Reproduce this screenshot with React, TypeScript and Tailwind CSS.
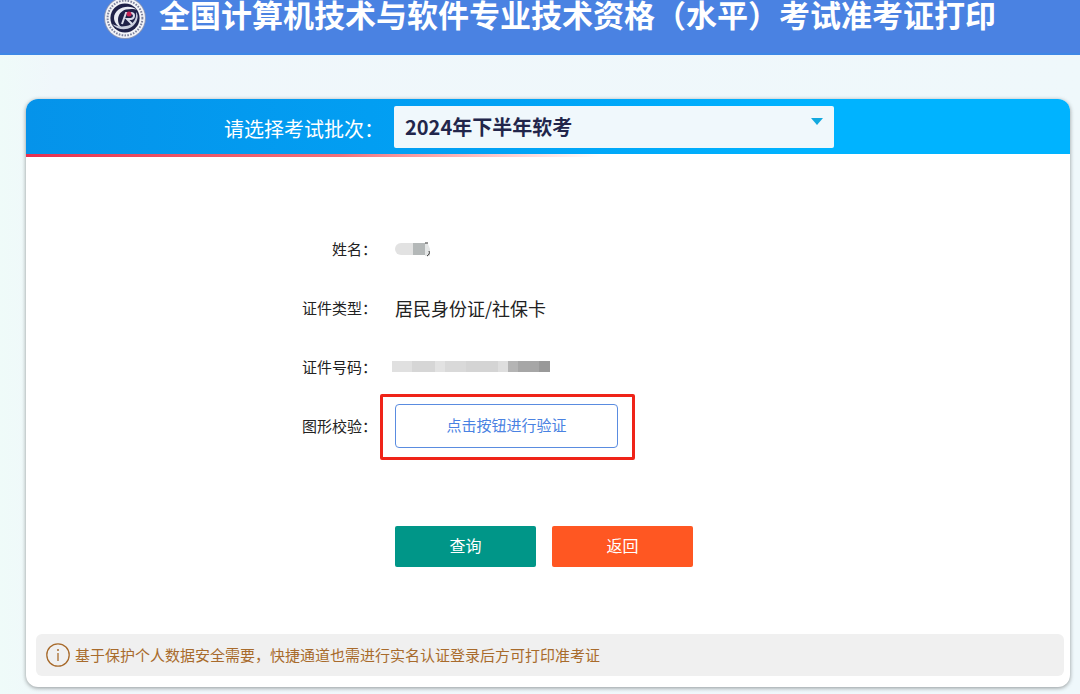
import { useState } from "react";
import type { ReactNode } from "react";

const idBlocks = [
  "w-[20px] bg-[#e0e0e0]",
  "w-[23px] bg-[#d6d6d6]",
  "w-[10px] bg-[#e2e2e2]",
  "w-[21px] bg-[#d9d9d9]",
  "w-[32px] bg-[#d4d4d4]",
  "w-[10px] bg-[#dedede]",
  "w-[10px] bg-[#b4b4b4]",
  "w-[21px] bg-[#a6a6a6]",
  "w-[11px] bg-[#999999]",
];

const Logo = () => (
  <svg width="42" height="39" viewBox="0 3 42 39" aria-hidden="true" className="shrink-0">
    <circle cx="21" cy="21" r="21" fill="#8b97b8" />
    <circle cx="21" cy="21" r="20" fill="#f3f4f8" />
    <circle cx="21" cy="21" r="17.4" fill="none" stroke="#7d829c" strokeWidth="2" strokeDasharray="1.6 1.3" />
    <circle cx="21" cy="21" r="14.6" fill="#1f2148" />
    <path d="M33 13C25 6 10 11 10 21c0 5 4 9 9 10C12 28 12 15 22 12.500c5-1 9-.5 11 .5z" fill="#e9ebf3" />
    <path d="M8 27c7 8 21 7 25-4 1-3 1-6-1-8 1 7-3 13-10 14-5 1-10 0-14-2z" fill="#c9cddd" />
    <path d="M18 27l4-11h5c4 0 4 5 0 6h-4l5 5" fill="none" stroke="#d9dcea" strokeWidth="2" />
    <circle cx="25" cy="17" r="2.500" fill="#c62252" />
  </svg>
);

const Row = ({ label, children }: { label: ReactNode; children: ReactNode }) => (
  <div className="flex h-[59px] items-center gap-[18px]">
    <div className="w-[351px] shrink-0 text-right text-[15px] leading-6">{label}</div>
    {children}
  </div>
);

const App = () => {
  const [batch, setBatch] = useState("2024-2");

  return (
    <div className="min-h-screen bg-linear-to-r from-[#effbf9] via-[#f0f7fb] via-5% to-[#eff8fb] pb-2 font-['Noto_Sans_CJK_SC',sans-serif] text-[#222222]">
      {/* Header */}
      <header className="flex items-start justify-center gap-[13px] border-b-2 border-[#3f87e6] bg-[#4a82e2] pb-[14px] pl-[20px]">
        <Logo />
        <h1 className="text-[31px] leading-7 font-bold whitespace-nowrap text-white">
          全国计算机技术与软件专业技术资格（水平）考试准考证打印
        </h1>
      </header>

      <main className="mt-11 mr-[10px] ml-[26px] overflow-hidden rounded-xl bg-white shadow-[0_1px_4px_rgba(0,0,0,0.4)]">
        {/* Exam batch */}
        <div className="flex h-[55px] items-center gap-[10px] bg-linear-to-r from-[#0593ea] via-[#01a2f5] via-45% to-[#00b3ff] to-75%">
          <label htmlFor="batch" className="w-[358px] shrink-0 pt-1 text-right text-xl text-white">
            请选择考试批次：
          </label>
          <div className="relative w-[440px]">
            <select
              id="batch"
              value={batch}
              onChange={(e) => setBatch(e.target.value)}
              className="h-[42px] w-full appearance-none rounded-xs bg-[#f0f8fc] pl-[11px] text-xl font-bold text-[#22264b]"
            >
              <option value="2024-2">2024年下半年软考</option>
            </select>
            <svg width="12" height="7" viewBox="0 0 12 7" aria-hidden="true" className="pointer-events-none absolute top-3 right-[11px]">
              <path d="M0 0h12L6 7z" fill="#12a9df" />
            </svg>
          </div>
        </div>
        <div className="h-[3px] bg-linear-to-r from-[#e62f50] via-[#f0707a] via-30% to-white to-55%" />

        <form onSubmit={(e) => e.preventDefault()} className="pt-[62px]">
          <Row label="姓名：">
            <div className="flex h-3 items-center">
              <span className="h-3 w-[18px] rounded-l-full bg-[#e2e2e2]" />
              <span className="h-3 w-3 bg-[#b4b8b8]" />
              <svg width="6" height="18" viewBox="0 0 6 18" aria-hidden="true">
                <path d="M0 3l3 1 2 5v7H0z" fill="#e4e6e6" />
                <path d="M0 3h3M4 11c1 2 0 4-2 5" fill="none" stroke="#333333" />
              </svg>
            </div>
          </Row>
          <Row label="证件类型：">
            <span className="text-lg leading-6">居民身份证/社保卡</span>
          </Row>
          <Row label="证件号码：">
            <div className="-ml-[3px] flex h-[11px]">
              {idBlocks.map((block, i) => (
                <span key={i} className={block} />
              ))}
            </div>
          </Row>
          <Row label={<label htmlFor="verify">图形校验：</label>}>
            <div className="relative">
              <button
                id="verify"
                type="button"
                className="h-11 w-[223px] rounded-sm border border-[#5a8ce0] bg-white text-[15px] text-[#4a82e2]"
              >
                点击按钮进行验证
              </button>
              <span className="pointer-events-none absolute -top-[10px] -right-[17px] -bottom-3 -left-[15px] rounded-xs border-3 border-[#ef2318]" />
            </div>
          </Row>

          <div className="mt-[71px] flex gap-4 pl-[369px] text-base leading-5 text-white">
            <button type="submit" className="h-[41px] w-[141px] rounded-xs bg-[#009688] pb-1">
              查询
            </button>
            <button type="button" className="h-[41px] w-[141px] rounded-xs bg-[#ff5722] pb-1">
              返回
            </button>
          </div>
        </form>

        {/* Notice */}
        <div className="mt-[67px] mr-[6px] mb-[11px] ml-[10px] flex h-[42px] items-center gap-[5px] rounded-md bg-[#f0f0f0] pl-[10px] text-[15px] text-[#a86b2c]">
          <svg width="24" height="24" viewBox="0 0 24 24" fill="none" stroke="currentColor" aria-hidden="true">
            <circle cx="12" cy="12" r="11.2" strokeWidth="1.3" />
            <path d="M12 10v8" strokeWidth="1.3" />
            <circle cx="12" cy="7" r="1" fill="currentColor" stroke="none" />
          </svg>
          <p>基于保护个人数据安全需要，快捷通道也需进行实名认证登录后方可打印准考证</p>
        </div>
      </main>
    </div>
  );
};

export default App;
